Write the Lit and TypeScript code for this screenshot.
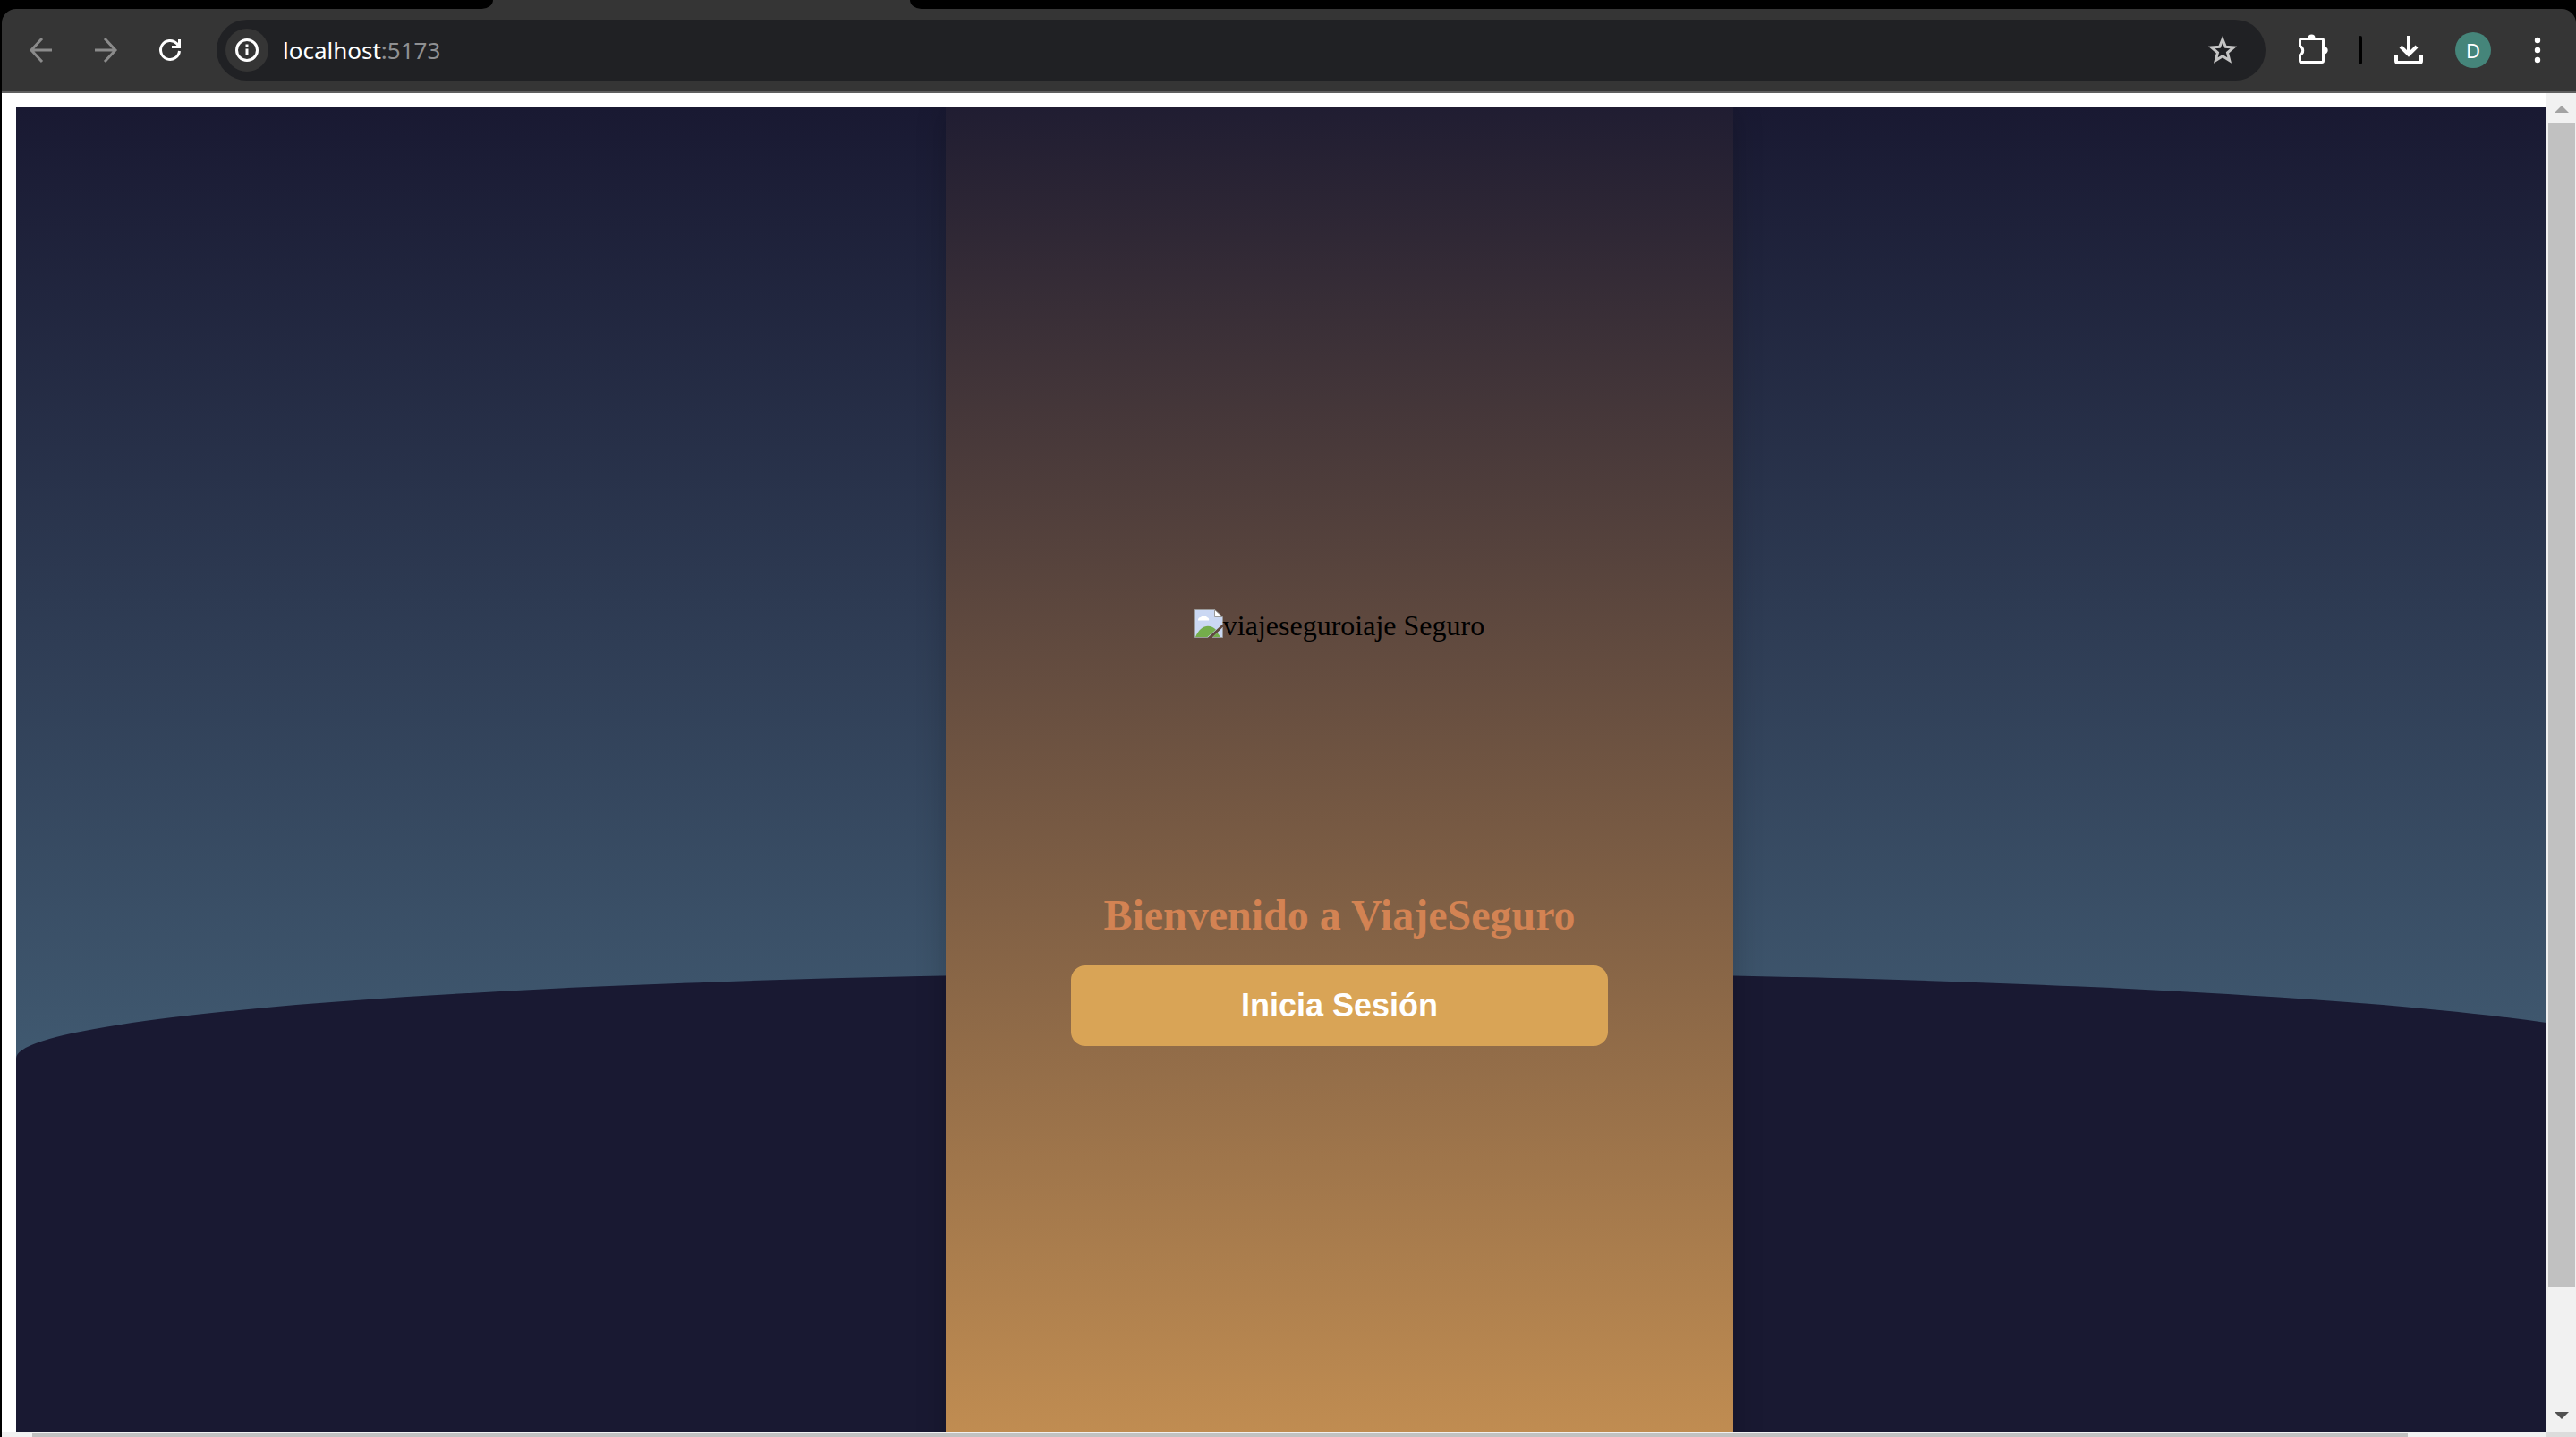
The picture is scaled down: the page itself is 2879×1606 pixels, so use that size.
import { LitElement, html, css } from "lit";
import { customElement } from "lit/decorators.js";

@customElement("browser-toolbar")
class BrowserToolbar extends LitElement {
  static styles = css`
    :host { display: block; background: #000; font-family: "Noto Sans", "Open Sans", sans-serif; }
    * { box-sizing: border-box; }
    .tabstrip { display: flex; height: 10px; background: #353535; }
    .tabs-before { width: 551px; background: #000; border-bottom-right-radius: 20px 16px; }
    .tab-active { width: 466px; }
    .tabs-after { flex: 1; background: #000; border-bottom-left-radius: 20px 16px; }
    .bar-wrap { padding-left: 2px; }
    .bar {
      display: flex; align-items: center; height: 94px; padding: 0 19px 0 20px;
      background: #353535; border-bottom: 2px solid #5f5f5f; border-radius: 16px 16px 0 0;
    }
    button { border: 0; padding: 0; margin: 0; background: none; color: #fff; display: flex; align-items: center; justify-content: center; }
    svg { display: block; }
    .nav { display: flex; gap: 24px; margin-right: 28px; }
    .nav button { width: 48px; height: 48px; }
    .nav .dim { color: #8b8b8b; }
    .address {
      flex: 1; display: flex; align-items: center; height: 68px; padding: 0 24px 0 10px;
      border-radius: 34px; background: #202124;
    }
    .info { width: 48px; height: 48px; border-radius: 50%; background: #353535; }
    .url { flex: 1; margin-left: 16px; font-size: 26px; line-height: 36px; color: #8f9092; text-decoration: none; }
    .host { color: #fff; }
    .star { width: 48px; height: 48px; color: #c4c4c4; }
    .actions { display: flex; align-items: center; margin-left: 28px; }
    .actions button { width: 48px; height: 48px; }
    .sep { width: 4px; height: 32px; margin: 0 28px; border-radius: 2px; background: #000; }
    .actions .avatar { width: 40px; height: 40px; margin: 0 28px; border-radius: 50%; background: #45857a; font: 22px/40px "Noto Sans", sans-serif; }
  `;

  render() {
    return html`
      <div class="tabstrip">
        <div class="tabs-before"></div>
        <div class="tab-active"></div>
        <div class="tabs-after"></div>
      </div>
      <div class="bar-wrap">
        <div class="bar">
          <div class="nav">
            <button class="dim" aria-label="Atrás">
              <svg width="32" height="32" viewBox="0 0 32 32" fill="none" stroke="currentColor" stroke-width="3"><path d="M28 16H6M17 3L5 16l12 13" /></svg>
            </button>
            <button class="dim" aria-label="Adelante">
              <svg width="32" height="32" viewBox="0 0 32 32" fill="none" stroke="currentColor" stroke-width="3"><path d="M4 16h22M15 3l12 13-12 13" /></svg>
            </button>
            <button aria-label="Recargar">
              <svg width="32" height="32" viewBox="0 0 32 32" fill="none" stroke="currentColor" stroke-width="3"><path d="M26.500 17a10.500 10.500 0 1 1-2.800-8.200L26 12M26.500 4v8.500H18" /></svg>
            </button>
          </div>
          <div class="address">
            <button class="info" aria-label="Información del sitio">
              <svg width="32" height="32" viewBox="0 0 32 32" fill="none" stroke="currentColor" stroke-width="3"><circle cx="16" cy="16" r="11.500" /><path d="M16 14.500V22M16 9.500v3" /></svg>
            </button>
            <a class="url" href="http://localhost:5173"><span class="host">localhost</span>:5173</a>
            <button class="star" aria-label="Añadir a marcadores">
              <svg width="36" height="36" viewBox="0 0 36 36" fill="none" stroke="currentColor" stroke-width="3"><path d="M18 6l3.400 8.300 9 .7-6.900 5.800 2.200 8.700L18 24.800l-7.700 4.700 2.200-8.700L5.600 15l9-.7z" /></svg>
            </button>
          </div>
          <div class="actions">
            <button aria-label="Extensiones">
              <svg width="40" height="40" viewBox="0 0 40 40">
                <path d="M8 7.500h23a1.500 1.500 0 0 1 1.500 1.500v23a1.500 1.500 0 0 1-1.500 1.500H8A1.500 1.500 0 0 1 6.500 32v-6.500a5.500 5.500 0 0 0 0-10V9A1.500 1.500 0 0 1 8 7.500z" fill="none" stroke="currentColor" stroke-width="3" />
                <path d="M15.500 6.500a4 4 0 0 1 8 0zM33.500 16a4.200 4.200 0 0 1 0 8.400z" fill="currentColor" />
              </svg>
            </button>
            <span class="sep"></span>
            <button aria-label="Descargas">
              <svg width="36" height="36" viewBox="0 0 36 36" fill="none" stroke="currentColor" stroke-width="4"><path d="M18 2v21M9 14l9 9 9-9M4 24v6a2 2 0 0 0 2 2h24a2 2 0 0 0 2-2v-6" /></svg>
            </button>
            <button class="avatar" aria-label="Perfil D">D</button>
            <button aria-label="Menú">
              <svg width="8" height="32" viewBox="0 0 8 32" fill="currentColor"><circle cx="4" cy="5" r="3.200" /><circle cx="4" cy="16" r="3.200" /><circle cx="4" cy="27" r="3.200" /></svg>
            </button>
          </div>
        </div>
      </div>
    `;
  }
}

@customElement("welcome-page")
class WelcomePage extends LitElement {
  static styles = css`
    :host { display: block; height: 100%; overflow: hidden; background: #fff; }
    * { box-sizing: border-box; }
    .scene {
      position: relative; display: flex; justify-content: center;
      width: calc(100% + 114px); height: calc(100% + 114px); margin: 16px 0 0 16px;
      background: linear-gradient(180deg, #191932, #547a90);
      overflow: hidden;
    }
    .ground { position: absolute; inset: 60% 0 0 0; background: #191932; border-radius: 50% 50% 0 0 / 15% 15% 0 0; }
    .panel {
      position: relative; display: flex; flex-direction: column; align-items: center; justify-content: center;
      width: 880px; height: 100%; padding: 0 140px;
      background: linear-gradient(180deg, #201d32, #ce9654);
      box-shadow: 0 0 32px rgba(0, 0, 0, 0.2);
    }
    .logo { display: flex; align-items: flex-start; height: 314px; font: 32px/37px "Liberation Serif", serif; color: #000; }
    h1 { margin: 0 0 28px; font: bold 48px/56px "Liberation Serif", serif; color: #d38353; white-space: nowrap; }
    .login {
      width: 100%; height: 90px; border: 0; border-radius: 16px; background: #d9a456; color: #fff;
      font: bold 36px/40px "Liberation Sans", sans-serif;
    }
  `;

  render() {
    return html`
      <main class="scene">
        <div class="ground"></div>
        <section class="panel">
          <div class="logo">
            <svg width="32" height="32" viewBox="0 0 32 32" aria-hidden="true">
              <path d="M.5.500h22l9 9v7L15 31.500H.500z" fill="#cbd8f3" />
              <path d="M4 12.500a3 3 0 0 1 3-3.500 4 4 0 0 1 7 0 2.500 2.500 0 0 1 2 3.500z" fill="#fff" />
              <path d="M1 31C7 17 17 16 24 22.800L14.500 31z" fill="#74ad4b" />
              <path d="M31.500 20v11.500H20z" fill="#cbd8f3" />
              <path d="M25.500 26l3.500 5h-8.500z" fill="#74ad4b" />
              <path d="M15 31.500H.5V.500h22l9 9v7M31.500 20v11.500H20" fill="none" stroke="#9a9a9a" />
              <path d="M22.500.500v8h9z" fill="#fff" stroke="#9a9a9a" />
            </svg>
            <span>viajeseguroiaje Seguro</span>
          </div>
          <h1>Bienvenido a ViajeSeguro</h1>
          <button class="login">Inicia Sesión</button>
        </section>
      </main>
    `;
  }
}

@customElement("app-root")
class AppRoot extends LitElement {
  static styles = css`
    :host { display: flex; flex-direction: column; height: 100vh; overflow: hidden; background: #000; }
    * { box-sizing: border-box; }
    .view {
      flex: 1; min-height: 0; display: grid; margin-left: 2px;
      grid-template: minmax(0, 1fr) 6px / minmax(0, 1fr) 33px; background: #f1f1f1;
    }
    .vbar { display: flex; flex-direction: column; align-items: center; padding: 14px 1px 14px 2px; }
    .track { flex: 1; width: 100%; margin: 12px 0 11px; }
    .vthumb { height: 91%; background: #c1c1c1; }
    .hbar { padding: 2px 155px 0 34px; overflow: hidden; }
    .hthumb { height: 4px; background: #c1c1c1; }
    .corner { background: #dcdcdc; }
    svg { display: block; }
  `;

  render() {
    return html`
      <browser-toolbar></browser-toolbar>
      <div class="view">
        <welcome-page></welcome-page>
        <div class="vbar">
          <svg width="16" height="8" viewBox="0 0 16 8"><path d="M8 0l8 8H0z" fill="#a3a3a3" /></svg>
          <div class="track"><div class="vthumb"></div></div>
          <svg width="16" height="8" viewBox="0 0 16 8"><path d="M0 0h16L8 8z" fill="#505050" /></svg>
        </div>
        <div class="hbar"><div class="hthumb"></div></div>
        <div class="corner"></div>
      </div>
    `;
  }
}
